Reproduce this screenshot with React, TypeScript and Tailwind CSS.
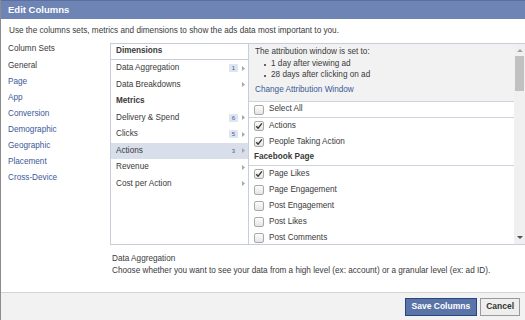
import React from 'react';

const columnSets = ['Page', 'App', 'Conversion', 'Demographic', 'Geographic', 'Placement', 'Cross-Device'];

type Row = { label: string; kind: 'head' | 'item'; badge?: string; active?: boolean };

const rows: Row[] = [
  { label: 'Data Aggregation', kind: 'item', badge: '1' },
  { label: 'Data Breakdowns', kind: 'item' },
  { label: 'Metrics', kind: 'head' },
  { label: 'Delivery & Spend', kind: 'item', badge: '6' },
  { label: 'Clicks', kind: 'item', badge: '5' },
  { label: 'Actions', kind: 'item', badge: '3', active: true },
  { label: 'Revenue', kind: 'item' },
  { label: 'Cost per Action', kind: 'item' },
];

const Checkbox = ({ checked }: { checked?: boolean }) => (
  <span className="w-[10px] h-[10px] shrink-0 rounded-[2px] border border-[#a9a9a9] bg-gradient-to-b from-[#fdfdfd] to-[#e4e4e4] flex items-center justify-center">
    {checked && (
      <svg width="8" height="8" viewBox="0 0 8 8">
        <path d="M1.2 4.2 L3.1 6.2 L6.9 1.4" fill="none" stroke="#3a3a3a" strokeWidth="1.4" />
      </svg>
    )}
  </span>
);

const CheckRow = ({ label, checked, border }: { label: string; checked?: boolean; border?: boolean }) => (
  <div className={`h-[16px] flex items-center gap-[5px] pl-[5px] ${border ? 'border-b border-[#cdd3e0]' : ''}`}>
    <Checkbox checked={checked} />
    <span>{label}</span>
  </div>
);

const Arrow = () => (
  <span className="w-[8px] flex justify-center">
    <svg width="3" height="5" viewBox="0 0 3 5">
      <path d="M0 0 L3 2.5 L0 5 Z" fill="#a8a8a8" />
    </svg>
  </span>
);

export default function App() {
  return (
    <div
      className="w-[525px] h-[320px] bg-white border-l border-[#8c8c8c] flex flex-col text-[8.2px] text-[#3a3a3a] overflow-hidden"
      style={{ fontFamily: '"Liberation Sans", Arial, sans-serif' }}
    >
      {/* Header */}
      <div className="h-[19px] shrink-0 bg-[#6d84b4] border-t border-[#5b6f9f] flex items-center pl-[7px]">
        <span className="text-white font-bold text-[9.5px]">Edit Columns</span>
      </div>

      <div className="h-[24px] shrink-0 flex items-center pl-[8px] pt-[1px]">
        Use the columns sets, metrics and dimensions to show the ads data most important to you.
      </div>

      <div className="flex h-[202px] shrink-0">
        {/* Column sets */}
        <div className="w-[109px] shrink-0 pl-[7px] pt-[1px]">
          <div className="h-[10px] flex items-center">Column Sets</div>
          <div className="h-[16px] flex items-end mt-[2px]">General</div>
          {columnSets.map(s => (
            <div key={s} className="h-[16px] flex items-end text-[#3b5998]">
              {s}
            </div>
          ))}
        </div>

        {/* Category list */}
        <div className="w-[139px] shrink-0 border border-[#c6cddd]">
          <div className="h-[16px] flex items-center pl-[5px] font-bold border-b border-[#c6cddd]">Dimensions</div>
          {rows.map(r =>
            r.kind === 'head' ? (
              <div key={r.label} className="h-[16.5px] flex items-center pl-[5px] font-bold">
                {r.label}
              </div>
            ) : (
              <div
                key={r.label}
                className={`h-[16.5px] flex items-center pl-[5px] pr-[1px] ${r.active ? 'bg-[#d8dfea]' : ''}`}
              >
                <span className="flex-1">{r.label}</span>
                {r.badge && (
                  <span
                    className={`text-[6px] leading-[8px] px-[3px] rounded-[1px] text-[#3b5998] mr-[1px] ${
                      r.active ? '' : 'bg-[#dfe5f0]'
                    }`}
                  >
                    {r.badge}
                  </span>
                )}
                <Arrow />
              </div>
            )
          )}
        </div>

        {/* Options */}
        <div className="flex-1 flex border-t border-b border-[#c6cddd] overflow-hidden">
          <div className="flex-1 overflow-hidden">
            <div className="h-[58px] bg-[#f2f2f2] border-b border-[#cdd3e0] pl-[6px] pt-[3px]">
              <div className="h-[10px] flex items-center">The attribution window is set to:</div>
              <ul className="mt-[2px] pl-[9px]">
                <li className="h-[11px] flex items-center gap-[5px]">
                  <span className="w-[2px] h-[2px] rounded-full bg-[#333]" />1 day after viewing ad
                </li>
                <li className="h-[11px] flex items-center gap-[5px]">
                  <span className="w-[2px] h-[2px] rounded-full bg-[#333]" />28 days after clicking on ad
                </li>
              </ul>
              <div className="mt-[4px] h-[10px] flex items-center text-[#3b5998]">Change Attribution Window</div>
            </div>
            <CheckRow label="Select All" border />
            <CheckRow label="Actions" checked />
            <CheckRow label="People Taking Action" checked />
            <div className="h-[16px] flex items-center pl-[5px] font-bold border-b border-[#cdd3e0]">Facebook Page</div>
            <CheckRow label="Page Likes" checked />
            <CheckRow label="Page Engagement" />
            <CheckRow label="Post Engagement" />
            <CheckRow label="Post Likes" />
            <CheckRow label="Post Comments" />
            <div className="h-[7px] overflow-hidden">
              <CheckRow label="Post Shares" />
            </div>
          </div>

          {/* Scrollbar */}
          <div className="w-[11px] shrink-0 bg-[#f0f0f0] flex flex-col items-center">
            <div className="h-[12px] flex items-center justify-center">
              <svg width="6" height="4" viewBox="0 0 6 4">
                <path d="M0 4 L3 1 L6 4 Z" fill="#a3a3a3" />
              </svg>
            </div>
            <div className="w-[9px] h-[35px] bg-[#c1c1c1]" />
            <div className="flex-1" />
            <div className="h-[12px] flex items-center justify-center">
              <svg width="6" height="4" viewBox="0 0 6 4">
                <path d="M0 0 L3 3 L6 0 Z" fill="#505050" />
              </svg>
            </div>
          </div>
        </div>
      </div>

      {/* Description */}
      <div className="pl-[111px] pt-[9px]">
        <div className="h-[11px] flex items-center">Data Aggregation</div>
        <div className="h-[12px] flex items-center">
          Choose whether you want to see your data from a high level (ex: account) or a granular level (ex: ad ID).
        </div>
      </div>

      <div className="flex-1" />

      {/* Footer */}
      <div className="h-[28px] shrink-0 bg-[#f2f2f2] border-t border-[#d4d4d4] flex items-center justify-end gap-[3px] pr-[5px]">
        <button className="h-[18px] px-[6px] bg-[#5b74a8] border border-[#29447e] text-white font-bold text-[8.5px]">
          Save Columns
        </button>
        <button className="h-[18px] px-[5px] bg-[#eeeeee] border border-[#999] text-[#333] font-bold text-[8.5px]">
          Cancel
        </button>
      </div>
    </div>
  );
}
